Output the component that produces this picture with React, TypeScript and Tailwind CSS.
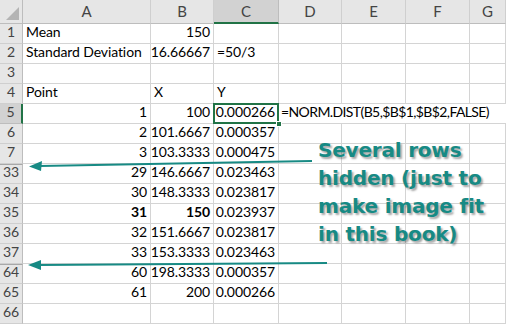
import React from "react";

const cols = ["A", "B", "C", "D", "E", "F", "G"];

type Row = {
  n: string;
  a?: string;
  b?: string;
  c?: string;
  d?: string;
  aRight?: boolean;
  bRight?: boolean;
  cRight?: boolean;
  bold?: boolean;
};

const rows: Row[] = [
  { n: "1", a: "Mean", b: "150", bRight: true },
  { n: "2", a: "Standard Deviation", b: "16.66667", bRight: true, c: "=50/3" },
  { n: "3" },
  { n: "4", a: "Point", b: "X", c: "Y" },
  { n: "5", a: "1", b: "100", c: "0.000266", d: "=NORM.DIST(B5,$B$1,$B$2,FALSE)", aRight: true, bRight: true, cRight: true },
  { n: "6", a: "2", b: "101.6667", c: "0.000357", aRight: true, bRight: true, cRight: true },
  { n: "7", a: "3", b: "103.3333", c: "0.000475", aRight: true, bRight: true, cRight: true },
  { n: "33", a: "29", b: "146.6667", c: "0.023463", aRight: true, bRight: true, cRight: true },
  { n: "34", a: "30", b: "148.3333", c: "0.023817", aRight: true, bRight: true, cRight: true },
  { n: "35", a: "31", b: "150", c: "0.023937", aRight: true, bRight: true, cRight: true, bold: true },
  { n: "36", a: "32", b: "151.6667", c: "0.023817", aRight: true, bRight: true, cRight: true },
  { n: "37", a: "33", b: "153.3333", c: "0.023463", aRight: true, bRight: true, cRight: true },
  { n: "64", a: "60", b: "198.3333", c: "0.000357", aRight: true, bRight: true, cRight: true },
  { n: "65", a: "61", b: "200", c: "0.000266", aRight: true, bRight: true, cRight: true },
  { n: "66" },
];

function Cell({ text, right, bold }: { text?: string; right?: boolean; bold?: boolean }) {
  return (
    <div
      className={`flex items-end border-r border-b border-[#d4d4d4] px-[3px] pb-[1px] whitespace-nowrap ${
        right ? "justify-end" : "justify-start"
      } ${bold ? "font-bold" : ""}`}
    >
      {text}
    </div>
  );
}

export default function App() {
  return (
    <div className="relative w-[506px] h-[324px] overflow-hidden bg-white text-[14px] tracking-[-0.1px] text-black font-['Lato','Open_Sans',sans-serif]">
      <div className="grid grid-cols-[23px_128px_63px_65px_63px_64px_64px_1fr] grid-rows-[24px_repeat(15,20px)]">
        {/* corner */}
        <div className="relative bg-[#e6e6e6] border-r border-b border-[#bdbdbd]">
          <div className="absolute right-[3px] bottom-[3px] w-0 h-0 border-l-[13px] border-l-transparent border-b-[13px] border-b-[#b4b4b4]" />
        </div>
        {cols.map((c) => (
          <div
            key={c}
            className={`flex items-center justify-center text-[15px] text-[#444] ${
              c === "C"
                ? "bg-[#d2d2d2] border-r border-r-[#bdbdbd] border-b-2 border-b-[#217346]"
                : "bg-[#e6e6e6] border-r border-r-[#cfcfcf] border-b border-b-[#bdbdbd]"
            }`}
          >
            {c}
          </div>
        ))}

        {rows.map((r) => (
          <React.Fragment key={r.n}>
            <div
              className={`flex items-end justify-center pb-[1px] text-[#444] border-b ${
                r.n === "5"
                  ? "bg-[#d2d2d2] border-r-2 border-r-[#217346] border-b-[#bdbdbd]"
                  : "bg-[#e6e6e6] border-r border-r-[#bdbdbd] border-b-[#cfcfcf]"
              } ${r.n === "33" || r.n === "64" ? "border-t border-t-[#a8a8a8]" : ""}`}
            >
              {r.n}
            </div>
            <Cell text={r.a} right={r.aRight} bold={r.bold} />
            <Cell text={r.b} right={r.bRight} bold={r.bold} />
            {r.n === "5" ? (
              <div className="relative flex items-end justify-end border-r border-b border-[#d4d4d4] px-[3px] pb-[1px]">
                <div className="absolute -left-[1px] -top-[1px] -right-[1px] -bottom-[1px] border-2 border-[#217346]" />
                <div className="absolute -right-[4px] -bottom-[4px] w-[6px] h-[6px] bg-[#217346] border border-white" />
                {r.c}
              </div>
            ) : (
              <Cell text={r.c} right={r.cRight} />
            )}
            {r.d ? (
              <div className="col-span-4 flex items-end border-b border-[#d4d4d4] px-[2px] pb-[1px] whitespace-nowrap tracking-[-0.6px]">
                {r.d}
              </div>
            ) : (
              <>
                <Cell />
                <Cell />
                <Cell />
                <Cell />
              </>
            )}
          </React.Fragment>
        ))}
      </div>

      {/* annotation arrows */}
      <svg className="absolute inset-0 pointer-events-none" width="506" height="324">
        <line x1="312" y1="161" x2="40" y2="166" stroke="#178a84" strokeWidth="2" />
        <polygon points="29,166.5 42,161 41,171" fill="#178a84" />
        <line x1="327" y1="263" x2="40" y2="265" stroke="#178a84" strokeWidth="2" />
        <polygon points="28,265 41,260 41,270" fill="#178a84" />
      </svg>

      <div className="absolute left-[318px] top-[136px] font-['DejaVu_Sans',Verdana,sans-serif] font-bold text-[20px] leading-[28px] tracking-[-0.2px] text-[#178a84] [text-shadow:2px_2px_2px_rgba(0,0,0,0.35)]">
        <div>Several rows</div>
        <div>hidden (just to</div>
        <div>make image fit</div>
        <div>in this book)</div>
      </div>
    </div>
  );
}
